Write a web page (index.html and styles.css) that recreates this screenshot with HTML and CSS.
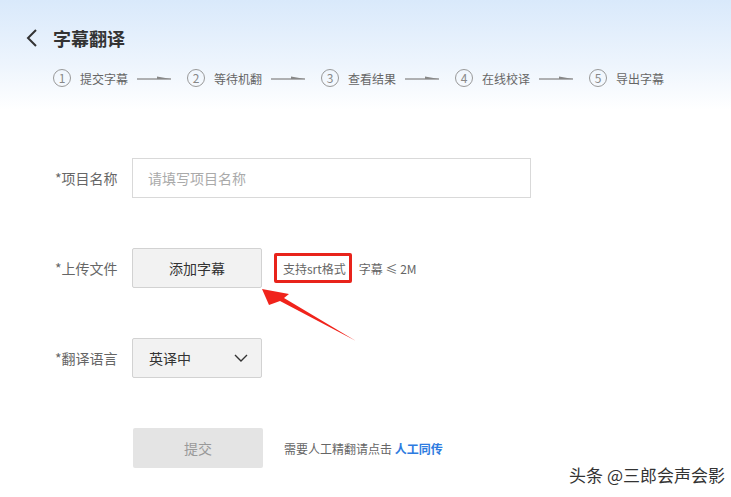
FILE: index.html
```html
<!DOCTYPE html>
<html lang="zh-CN">
<head>
  <meta charset="UTF-8" />
  <title>字幕翻译</title>
  <link rel="stylesheet" href="styles.css">
</head>
<body>
  <div class="page">
    <div class="top">
      <div class="title-row">
        <svg class="back" width="16" height="20" viewBox="0 0 16 20">
          <polyline points="12,2 4,10 12,18" fill="none" stroke="#333" stroke-width="2" />
        </svg>
        <h1>字幕翻译</h1>
      </div>
      <div class="steps">
        <div class="step"><span class="num">1</span><span>提交字幕</span></div>
        <svg class="arrow" width="34" height="8" viewBox="0 0 34 8"><line x1="0" y1="5" x2="34" y2="5" stroke="#999" stroke-width="1.3" /><polygon points="20,2.6 34,5 20,5" fill="#888" /></svg>
        <div class="step"><span class="num">2</span><span>等待机翻</span></div>
        <svg class="arrow" width="34" height="8" viewBox="0 0 34 8"><line x1="0" y1="5" x2="34" y2="5" stroke="#999" stroke-width="1.3" /><polygon points="20,2.6 34,5 20,5" fill="#888" /></svg>
        <div class="step"><span class="num">3</span><span>查看结果</span></div>
        <svg class="arrow" width="34" height="8" viewBox="0 0 34 8"><line x1="0" y1="5" x2="34" y2="5" stroke="#999" stroke-width="1.3" /><polygon points="20,2.6 34,5 20,5" fill="#888" /></svg>
        <div class="step"><span class="num">4</span><span>在线校译</span></div>
        <svg class="arrow" width="34" height="8" viewBox="0 0 34 8"><line x1="0" y1="5" x2="34" y2="5" stroke="#999" stroke-width="1.3" /><polygon points="20,2.6 34,5 20,5" fill="#888" /></svg>
        <div class="step"><span class="num">5</span><span>导出字幕</span></div>
      </div>
    </div>

    <form class="form">
      <div class="row">
        <label>*项目名称</label>
        <input class="text-input" type="text" placeholder="请填写项目名称">
      </div>
      <div class="row">
        <label>*上传文件</label>
        <div class="btn">添加字幕</div>
        <span class="note-box">支持srt格式</span>
        <span class="note">字幕 ≤ 2M</span>
      </div>
      <div class="row">
        <label>*翻译语言</label>
        <div class="btn select">
          <span>英译中</span>
          <svg width="14" height="8" viewBox="0 0 14 8"><polyline points="1,1 7,7 13,1" fill="none" stroke="#333" stroke-width="1.4" /></svg>
        </div>
      </div>
      <div class="row submit-row">
        <div class="btn submit">提交</div>
        <span class="help">需要人工精翻请点击 <a href="#">人工同传</a></span>
      </div>
    </form>

    <svg class="pointer" width="731" height="497" viewBox="0 0 731 497">
      <polygon points="262,289 289,294 284,298 356,341 280,301 269,305" fill="#f0231b" />
    </svg>

    <div class="watermark">头条 @三郎会声会影</div>
  </div>
</body>
</html>
```

FILE: styles.css
```css
body {
  margin: 0;
  font-family: "Noto Sans CJK SC", "Open Sans", sans-serif;
  color: #333;
  background: #fff;
}
.page {
  position: relative;
  width: 731px;
  height: 497px;
  overflow: hidden;
}
.top {
  height: 110px;
  box-sizing: border-box;
  padding: 27px 0 0 24px;
  background: linear-gradient(#d9e9fb, #eef5fd 60%, #fff 110px);
}
.title-row {
  display: flex;
  align-items: center;
  height: 22px;
}
.back {
  margin-right: 13px;
}
h1 {
  margin: 0;
  font-size: 18px;
  font-weight: bold;
  color: #333;
  line-height: 22px;
}
.steps {
  display: flex;
  align-items: center;
  margin-top: 20px;
  padding-left: 29px;
  height: 18px;
}
.step {
  display: flex;
  align-items: center;
  gap: 9px;
  font-size: 12px;
  color: #666;
}
.num {
  width: 16px;
  height: 16px;
  border: 1px solid #999;
  border-radius: 50%;
  font-size: 12px;
  line-height: 16px;
  text-align: center;
  color: #888;
}
.arrow {
  margin: 0 16px 0 9px;
}
.form {
  margin: 48px 0 0;
  padding-left: 55px;
}
.row {
  display: flex;
  align-items: center;
  height: 40px;
  margin-bottom: 50px;
}
.row label {
  width: 77px;
  font-size: 14px;
  color: #666;
}
.text-input {
  width: 399px;
  height: 40px;
  box-sizing: border-box;
  border: 1px solid #d9d9d9;
  padding: 0 15px;
  font-family: inherit;
  font-size: 14px;
  outline: none;
}
.text-input::placeholder {
  color: #aaa;
}
.btn {
  width: 130px;
  height: 40px;
  box-sizing: border-box;
  border: 1px solid #d2d2d2;
  border-radius: 2px;
  background: #f2f2f2;
  font-size: 14px;
  color: #333;
  display: flex;
  align-items: center;
  justify-content: center;
}
.select {
  justify-content: space-between;
  padding: 0 13px 0 16px;
}
.note-box {
  margin-left: 12px;
  border: 3px solid #e8231b;
  border-radius: 2px;
  height: 30px;
  box-sizing: border-box;
  padding: 0 3px 0 6px;
  display: flex;
  align-items: center;
  font-size: 12px;
  color: #666;
}
.note {
  margin-left: 7px;
  font-size: 12px;
  color: #666;
}
.submit-row {
  padding-left: 78px;
}
.submit {
  border: none;
  background: #e4e4e4;
  color: #999;
}
.help {
  margin-left: 21px;
  font-size: 12px;
  color: #666;
}
.help a {
  color: #2d7be0;
  text-decoration: none;
  font-weight: bold;
}
.pointer {
  position: absolute;
  left: 0;
  top: 0;
  pointer-events: none;
}
.watermark {
  position: absolute;
  right: 6px;
  bottom: 10px;
  font-size: 17px;
  color: #333;
  text-shadow: 0 0 2px #fff, 0 0 2px #fff;
}
```
